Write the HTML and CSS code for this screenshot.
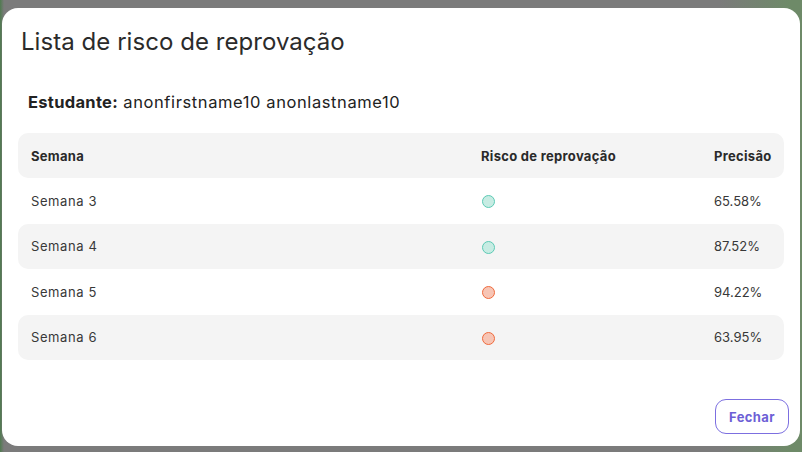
FILE: index.html
```html
<!DOCTYPE html>
<html lang="pt">
<head>
<meta charset="utf-8">
<link rel="stylesheet" href="styles.css">
</head>
<body>
<div class="backdrop">
  <div class="modal">
    <h1 class="title">Lista de risco de reprovação</h1>
    <p class="student"><strong>Estudante:</strong> anonfirstname10 anonlastname10</p>
    <div class="table">
      <div class="row head">
        <div class="cell">Semana</div>
        <div class="cell">Risco de reprovação</div>
        <div class="cell">Precisão</div>
      </div>
      <div class="row">
        <div class="cell">Semana 3</div>
        <div class="cell"><span class="dot low"></span></div>
        <div class="cell num">65.58%</div>
      </div>
      <div class="row alt">
        <div class="cell">Semana 4</div>
        <div class="cell"><span class="dot low"></span></div>
        <div class="cell num">87.52%</div>
      </div>
      <div class="row">
        <div class="cell">Semana 5</div>
        <div class="cell"><span class="dot high"></span></div>
        <div class="cell num">94.22%</div>
      </div>
      <div class="row alt">
        <div class="cell">Semana 6</div>
        <div class="cell"><span class="dot high"></span></div>
        <div class="cell num">63.95%</div>
      </div>
    </div>
    <div class="footer">
      <button class="btn">Fechar</button>
    </div>
  </div>
</div>
</body>
</html>
```
FILE: styles.css
```css
* { box-sizing: border-box; }
html, body { margin: 0; padding: 0; }
body {
  width: 802px;
  height: 452px;
  overflow: hidden;
  background: #7b7b7b;
  font-family: "Inter", "Open Sans", sans-serif;
  color: #333;
}
.backdrop {
  height: 452px;
  padding: 8px 2px 6px 2px;
  background: linear-gradient(90deg, #4f7a4f 0px, #7b7b7b 4px, #7b7b7b 720px, #6e8a68 790px);
}
.modal {
  height: 438px;
  background: #fff;
  border-radius: 16px;
  padding: 0 16px 0 16px;
  display: flex;
  flex-direction: column;
}
.title {
  margin: 0;
  padding: 20px 0 0 3px;
  font-size: 24px;
  font-weight: 400;
  line-height: 28px;
  color: #2b2b2b;
  letter-spacing: 0.05px;
}
.student {
  margin: 0;
  padding: 35px 0 0 10px;
  font-size: 16.5px;
  line-height: 22px;
  color: #222;
  letter-spacing: 0.6px;
}
.student strong { font-weight: 700; letter-spacing: 0.3px; }
.table {
  margin-top: 20px;
  display: flex;
  flex-direction: column;
}
.row {
  display: grid;
  grid-template-columns: 450px 233px 1fr;
  height: 45.5px;
  align-items: center;
  border-radius: 10px;
  font-size: 13px;
  color: #383838;
  letter-spacing: 0.6px;
}
.row.head {
  background: #f4f4f4;
  height: 45px;
  font-weight: 700;
  color: #2a2a2a;
  letter-spacing: 0.3px;
}
.row.alt { background: #f4f4f4; }
.cell { padding-left: 13px; }
.cell.num { letter-spacing: 0; }
.dot {
  display: block;
  width: 13px;
  height: 13px;
  border-radius: 50%;
  margin-left: 1px;
  margin-top: 2px;
}
.dot.low { background: #c7ece3; border: 1.5px solid #5ccab5; }
.dot.high { background: #f7c5b5; border: 1.5px solid #f06a3c; }
.footer {
  margin-top: auto;
  padding-bottom: 12px;
  display: flex;
  justify-content: flex-end;
  margin-right: -5px;
}
.btn {
  font-family: inherit;
  width: 74px;
  height: 35px;
  border: 1px solid #7c6fe0;
  border-radius: 11px;
  background: #fff;
  color: #6d5fd6;
  font-size: 13px;
  font-weight: 700;
  letter-spacing: 0.4px;
}
```
